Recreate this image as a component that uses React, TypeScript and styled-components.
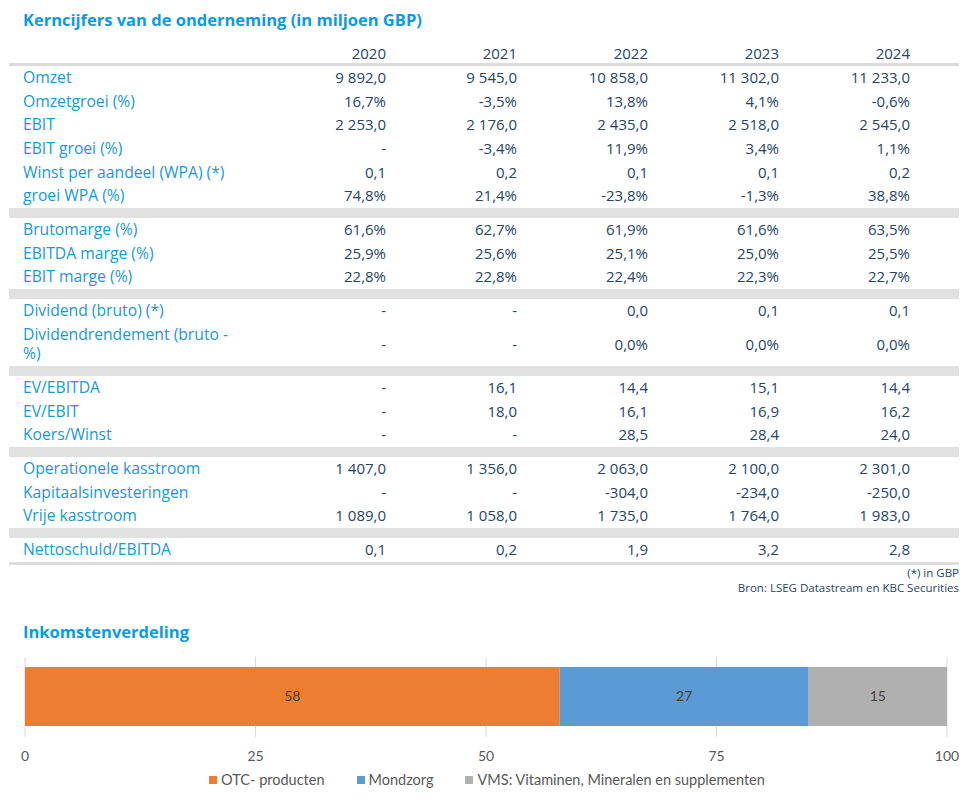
import React from "react";
import styled, { createGlobalStyle } from "styled-components";

const Global = createGlobalStyle`
  html, body { margin: 0; padding: 0; background: #ffffff; }
  body { font-family: "Open Sans", "Noto Sans", sans-serif; }
`;

const Page = styled.div`
  width: 950px;
  padding: 0 13px 0 9px;
  display: flex;
  flex-direction: column;
`;

const Title = styled.h1<{ $top: number }>`
  margin: ${(p) => p.$top}px 0 0 0;
  padding-left: 14px;
  font-size: 16.5px;
  line-height: 22px;
  font-weight: 700;
  color: #0b9be0;
`;

const Grid = "246px repeat(5, 131px) 49px";

const HeaderRow = styled.div`
  margin-top: 11px;
  display: grid;
  grid-template-columns: ${Grid};
  height: 21px;
  align-items: center;
  border-bottom: 3px solid #dcdcdc;
  font-size: 15px;
  color: #26456a;
`;

const Row = styled.div`
  display: grid;
  grid-template-columns: ${Grid};
  align-items: center;
  padding: 2px 0;
  line-height: 19.67px;
  font-size: 15.7px;
`;

const Label = styled.div`
  padding-left: 14px;
  padding-right: 16px;
  color: #1798d8;
`;

const Value = styled.div`
  text-align: right;
  color: #26456a;
  font-size: 15px;
`;

const Band = styled.div`
  height: 10px;
  background: #e1e1e1;
`;

const BottomLine = styled.div`
  height: 3px;
  background: #dedede;
`;

const Notes = styled.div`
  display: flex;
  flex-direction: column;
  align-items: flex-end;
  font-size: 11.5px;
  line-height: 15.5px;
  color: #26456a;
`;

const ChartWrap = styled.div`
  margin-top: 2px;
  display: flex;
  flex-direction: column;
`;

const Legend = styled.div`
  display: flex;
  justify-content: center;
  gap: 32px;
  margin-top: 5px;
  padding-left: 6px;
  font-family: Lato, "Open Sans", sans-serif;
  font-size: 14.5px;
  line-height: 18px;
  color: #595959;
`;

const LegendItem = styled.div`
  display: flex;
  align-items: center;
  gap: 4px;
`;

const Swatch = styled.span<{ $c: string }>`
  width: 8px;
  height: 8px;
  background: ${(p) => p.$c};
`;

type R = { label: string; v: string[] };

const groups: R[][] = [
  [
    { label: "Omzet", v: ["9 892,0", "9 545,0", "10 858,0", "11 302,0", "11 233,0"] },
    { label: "Omzetgroei (%)", v: ["16,7%", "-3,5%", "13,8%", "4,1%", "-0,6%"] },
    { label: "EBIT", v: ["2 253,0", "2 176,0", "2 435,0", "2 518,0", "2 545,0"] },
    { label: "EBIT groei (%)", v: ["-", "-3,4%", "11,9%", "3,4%", "1,1%"] },
    { label: "Winst per aandeel (WPA) (*)", v: ["0,1", "0,2", "0,1", "0,1", "0,2"] },
    { label: "groei WPA (%)", v: ["74,8%", "21,4%", "-23,8%", "-1,3%", "38,8%"] },
  ],
  [
    { label: "Brutomarge (%)", v: ["61,6%", "62,7%", "61,9%", "61,6%", "63,5%"] },
    { label: "EBITDA marge (%)", v: ["25,9%", "25,6%", "25,1%", "25,0%", "25,5%"] },
    { label: "EBIT marge (%)", v: ["22,8%", "22,8%", "22,4%", "22,3%", "22,7%"] },
  ],
  [
    { label: "Dividend (bruto) (*)", v: ["-", "-", "0,0", "0,1", "0,1"] },
    { label: "Dividendrendement (bruto - %)", v: ["-", "-", "0,0%", "0,0%", "0,0%"] },
  ],
  [
    { label: "EV/EBITDA", v: ["-", "16,1", "14,4", "15,1", "14,4"] },
    { label: "EV/EBIT", v: ["-", "18,0", "16,1", "16,9", "16,2"] },
    { label: "Koers/Winst", v: ["-", "-", "28,5", "28,4", "24,0"] },
  ],
  [
    { label: "Operationele kasstroom", v: ["1 407,0", "1 356,0", "2 063,0", "2 100,0", "2 301,0"] },
    { label: "Kapitaalsinvesteringen", v: ["-", "-", "-304,0", "-234,0", "-250,0"] },
    { label: "Vrije kasstroom", v: ["1 089,0", "1 058,0", "1 735,0", "1 764,0", "1 983,0"] },
  ],
  [{ label: "Nettoschuld/EBITDA", v: ["0,1", "0,2", "1,9", "3,2", "2,8"] }],
];

const years = ["2020", "2021", "2022", "2023", "2024"];

const segments = [
  { v: 58, c: "#ed7d31", name: "OTC- producten" },
  { v: 27, c: "#5b9bd5", name: "Mondzorg" },
  { v: 15, c: "#b0b0b0", name: "VMS: Vitaminen, Mineralen en supplementen" },
];

function Chart() {
  const x0 = 16;
  const scale = 9.22;
  const top = 12;
  let acc = 0;
  return (
    <svg width={950} height={121} viewBox="0 0 950 121">
      {[0, 25, 50, 75, 100].map((t) => (
        <line
          key={t}
          x1={x0 + t * scale}
          x2={x0 + t * scale}
          y1={top}
          y2={92}
          stroke="#d9d9d9"
          strokeWidth={1}
        />
      ))}
      {segments.map((s) => {
        const x = x0 + acc * scale;
        const w = s.v * scale;
        acc += s.v;
        return (
          <g key={s.name}>
            <rect x={x} y={22} width={w} height={59} fill={s.c} />
            <text
              x={x + w / 2}
              y={56}
              textAnchor="middle"
              fontFamily="Lato, 'Open Sans', sans-serif"
              fontSize={14}
              fill="#404040"
            >
              {s.v}
            </text>
          </g>
        );
      })}
      {[0, 25, 50, 75, 100].map((t) => (
        <text
          key={t}
          x={x0 + t * scale}
          y={116}
          textAnchor="middle"
          fontFamily="Lato, 'Open Sans', sans-serif"
          fontSize={14}
          fill="#595959"
        >
          {t}
        </text>
      ))}
    </svg>
  );
}

export default function App() {
  return (
    <Page>
      <Global />
      <Title $top={9}>Kerncijfers van de onderneming (in miljoen GBP)</Title>
      <HeaderRow>
        <div />
        {years.map((y) => (
          <Value key={y}>{y}</Value>
        ))}
        <div />
      </HeaderRow>
      {groups.map((g, gi) => (
        <React.Fragment key={gi}>
          {gi > 0 && <Band />}
          {g.map((r) => (
            <Row key={r.label}>
              <Label>{r.label}</Label>
              {r.v.map((v, i) => (
                <Value key={i}>{v}</Value>
              ))}
              <div />
            </Row>
          ))}
        </React.Fragment>
      ))}
      <BottomLine />
      <Notes>
        <span>(*) in GBP</span>
        <span>Bron: LSEG Datastream en KBC Securities</span>
      </Notes>
      <Title $top={25}>Inkomstenverdeling</Title>
      <ChartWrap>
        <Chart />
        <Legend>
          {segments.map((s) => (
            <LegendItem key={s.name}>
              <Swatch $c={s.c} />
              {s.name}
            </LegendItem>
          ))}
        </Legend>
      </ChartWrap>
    </Page>
  );
}
